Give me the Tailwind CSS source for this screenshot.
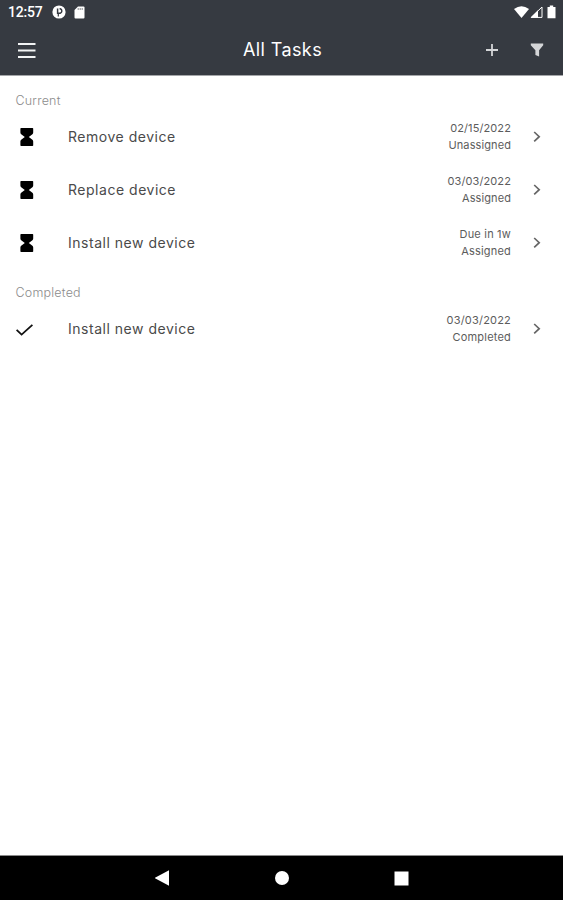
<!DOCTYPE html>
<html lang="en">
<head>
  <meta charset="UTF-8" />
  <title>All Tasks</title>
  <script src="https://cdn.jsdelivr.net/npm/@tailwindcss/browser@4"></script>
</head>
<body class="bg-white font-['Inter',sans-serif]">
  <svg class="hidden">
    <symbol id="hourglass" viewBox="0 0 14 18">
      <path d="M1 0H12.6L13.2 .6V4.6Q13.2 5.6 12.4 6.2L8.8 9L12.4 11.8Q13.2 12.4 13.2 13.4V17.4L12.6 18H1L.4 17.4V13.4Q.4 12.4 1.2 11.8L4.8 9L1.2 6.2Q.4 5.6 .4 4.6V.6Z" />
    </symbol>
    <symbol id="chevron" viewBox="0 0 8 12">
      <path d="M1.2 1L6.2 5.7L1.2 10.4" fill="none" stroke="currentColor" stroke-width="1.7" />
    </symbol>
  </svg>

  <div class="flex flex-col w-[563px] h-[900px] overflow-hidden">
    <header class="h-[75px] shrink-0 bg-[#363a41] text-white">
      <!-- Status bar -->
      <div class="flex items-center h-6 pl-2 pr-[7px]">
        <span class="w-[44px] font-['Roboto',sans-serif] font-medium text-[14px] leading-6 tracking-[-0.2px]">12:57</span>
        <svg class="w-[14px] h-[14px]" viewBox="0 0 14 14">
          <circle cx="7" cy="7" r="6.6" fill="#fff" />
          <path d="M5.6 3.4V8.2H8.2A2.3 2.3 0 0 0 8.2 3.8H7.6" fill="none" stroke="#363a41" stroke-width="1.5" />
          <path d="M6.3 9V11.5" stroke="#363a41" stroke-width="1.2" />
        </svg>
        <svg class="w-[11px] h-[13px] ml-[8px]" viewBox="0 0 11 13">
          <path d="M4 .5H9.5Q10.5 .5 10.5 1.5V11.5Q10.5 12.5 9.5 12.5H1.5Q.5 12.5 .5 11.5V4Z" fill="#fff" />
          <path d="M4.2 2V4M6.2 2V4M8.2 2V4" stroke="#363a41" stroke-width=".6" />
        </svg>
        <svg class="w-[15px] h-3 ml-auto" viewBox="0 0 15 12">
          <path d="M7.5 12L0 3Q7.5-2.4 15 3Z" fill="#fff" />
        </svg>
        <svg class="w-[13px] h-3 ml-[1px]" viewBox="0 0 13 12">
          <path d="M8 4.2V11.7H.5Z" fill="#fff" />
          <path d="M12 1V11.4H1.2Z" fill="none" stroke="#fff" stroke-width="1" />
        </svg>
        <svg class="w-[9px] h-[14px] ml-[4px]" viewBox="0 0 9 14">
          <path d="M2.8 .5H6.2V2H8.5V13.3H.5V2H2.8Z" fill="#fff" />
        </svg>
      </div>
      <!-- Toolbar -->
      <div class="grid grid-cols-3 items-center h-[51px] pl-[18px] pr-[19px]">
        <svg class="w-[18px] h-[17px] mt-[2px]" viewBox="0 0 18 17">
          <path d="M0 2H17.5M0 8.5H17.5M0 15H17.5" stroke="#f2f3f4" stroke-width="2.2" />
        </svg>
        <h1 class="pt-[1px] pl-[3px] text-center text-[18px] leading-6 tracking-[0.4px] whitespace-nowrap">All Tasks</h1>
        <div class="flex items-center justify-end gap-[32px]">
          <svg class="w-3 h-3" viewBox="0 0 12 12">
            <path d="M6 0V12M0 6H12" stroke="#d4d5d7" stroke-width="1.8" />
          </svg>
          <svg class="w-[14px] h-[14px]" viewBox="0 0 14 14">
            <path d="M.8 .5H13.2V2.2L9.1 7.2V13.6L5.4 12V7.2L.8 2.2Z" fill="#d4d5d7" />
          </svg>
        </div>
      </div>
    </header>

    <main class="grow border-t border-[#a4a6a9]">
      <h2 class="h-[34px] pt-[15px] pl-[15.5px] text-[12.5px] leading-5 text-[#8c8c8c] font-light tracking-[0.2px]">Current</h2>
      <ul>
        <li class="flex items-center h-[53px] pl-5 pr-[22px]">
          <svg class="w-[14px] h-[18px] mt-[1px]"><use href="#hourglass" /></svg>
          <span class="ml-[34px] text-[14px] text-[#4a4a4a] tracking-[0.52px]">Remove device</span>
          <div class="ml-auto mr-[22px] text-right text-[11px] leading-[17px] text-[#5c5c5c] tracking-[0.1px]">
            <p>02/15/2022</p>
            <p>Unassigned</p>
          </div>
          <svg class="w-2 h-3 text-[#666]"><use href="#chevron" /></svg>
        </li>
        <li class="flex items-center h-[53px] pl-5 pr-[22px]">
          <svg class="w-[14px] h-[18px] mt-[1px]"><use href="#hourglass" /></svg>
          <span class="ml-[34px] text-[14px] text-[#4a4a4a] tracking-[0.52px]">Replace device</span>
          <div class="ml-auto mr-[22px] text-right text-[11px] leading-[17px] text-[#5c5c5c] tracking-[0.1px]">
            <p>03/03/2022</p>
            <p>Assigned</p>
          </div>
          <svg class="w-2 h-3 text-[#666]"><use href="#chevron" /></svg>
        </li>
        <li class="flex items-center h-[53px] pl-5 pr-[22px]">
          <svg class="w-[14px] h-[18px] mt-[1px]"><use href="#hourglass" /></svg>
          <span class="ml-[34px] text-[14px] text-[#4a4a4a] tracking-[0.52px]">Install new device</span>
          <div class="ml-auto mr-[22px] text-right text-[11px] leading-[17px] text-[#5c5c5c] tracking-[0.2px]">
            <p>Due in 1w</p>
            <p>Assigned</p>
          </div>
          <svg class="w-2 h-3 text-[#666]"><use href="#chevron" /></svg>
        </li>
      </ul>

      <h2 class="h-[33px] pt-[14px] pl-[15.5px] text-[12.5px] leading-5 text-[#8c8c8c] font-light tracking-[0.2px]">Completed</h2>
      <ul>
        <li class="flex items-center h-[53px] pl-4 pr-[22px]">
          <svg class="w-[18px] h-3 mt-[2px]" viewBox="0 0 18 12">
            <path d="M.6 5.8L5.6 10.6L16.4 .9" fill="none" stroke="#111" stroke-width="1.8" />
          </svg>
          <span class="ml-[34px] text-[14px] text-[#4a4a4a] tracking-[0.52px]">Install new device</span>
          <div class="ml-auto mr-[22px] text-right text-[11px] leading-[17px] text-[#5c5c5c] tracking-[0.2px]">
            <p>03/03/2022</p>
            <p>Completed</p>
          </div>
          <svg class="w-2 h-3 text-[#666]"><use href="#chevron" /></svg>
        </li>
      </ul>
    </main>

    <!-- Android navigation -->
    <nav class="flex items-center justify-center gap-[105px] h-[45px] shrink-0 bg-black border-t border-[#8a8a8a]">
      <svg class="w-[15px] h-4" viewBox="0 0 15 16"><path d="M14 .3V15.7L-.3 8Z" fill="#fff" /></svg>
      <svg class="w-[14px] h-[14px]" viewBox="0 0 14 14"><circle cx="7" cy="7" r="7" fill="#fff" /></svg>
      <svg class="w-[15px] h-[15px]" viewBox="0 0 15 15"><rect x=".5" y=".5" width="14" height="14" fill="#fff" /></svg>
    </nav>
  </div>
</body>
</html>
